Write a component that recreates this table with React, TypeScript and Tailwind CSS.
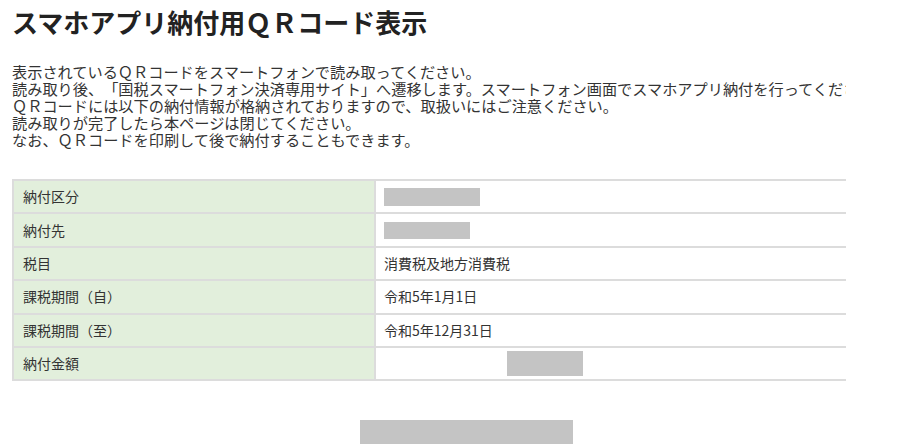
import React from "react";

const font = '"Noto Sans CJK JP", "Noto Sans", sans-serif';

const rows: { label: string; value?: string; box?: { ml: number; w: number; h: number } }[] = [
  { label: "納付区分", box: { ml: 8, w: 96, h: 18 } },
  { label: "納付先", box: { ml: 8, w: 86, h: 17 } },
  { label: "税目", value: "消費税及地方消費税" },
  { label: "課税期間（自）", value: "令和5年1月1日" },
  { label: "課税期間（至）", value: "令和5年12月31日" },
  { label: "納付金額", box: { ml: 131, w: 76, h: 25 } },
];

export default function App() {
  return (
    <div
      className="w-[900px] h-[444px] bg-white overflow-hidden [text-spacing-trim:space-all]"
      style={{ fontFamily: font }}
    >
      <div className="w-[846px] overflow-hidden pl-[12px]">
        <h1 className="mt-[6px] text-[26px] leading-[32px] font-bold text-[#222] whitespace-nowrap">
          スマホアプリ納付用ＱＲコード表示
        </h1>
        <div className="mt-[25px] text-[15.2px] leading-[17px] text-[#333] whitespace-nowrap">
          <div>表示されているＱＲコードをスマートフォンで読み取ってください。</div>
          <div>読み取り後、「国税スマートフォン決済専用サイト」へ遷移します。スマートフォン画面でスマホアプリ納付を行ってください。</div>
          <div>ＱＲコードには以下の納付情報が格納されておりますので、取扱いにはご注意ください。</div>
          <div>読み取りが完了したら本ページは閉じてください。</div>
          <div>なお、ＱＲコードを印刷して後で納付することもできます。</div>
        </div>
        <div className="mt-[31px] border-t-2 border-l-2 border-[#dcdcdc] text-[14px] text-[#333]">
          {rows.map((r) => (
            <div key={r.label} className="flex h-[33.4px] border-b-2 border-[#dcdcdc]">
              <div className="w-[362px] shrink-0 bg-[#e2efdc] border-r-2 border-[#dcdcdc] flex items-center pl-[9px]">
                {r.label}
              </div>
              <div className="flex-1 flex items-center pl-[8px]">
                {r.value}
                {r.box && (
                  <div
                    className="bg-[#c4c4c4]"
                    style={{ marginLeft: r.box.ml - 8, width: r.box.w, height: r.box.h }}
                  />
                )}
              </div>
            </div>
          ))}
        </div>
        <div className="mt-[39px] ml-[348px] w-[213px] h-[30px] bg-[#c4c4c4]" />
      </div>
    </div>
  );
}
